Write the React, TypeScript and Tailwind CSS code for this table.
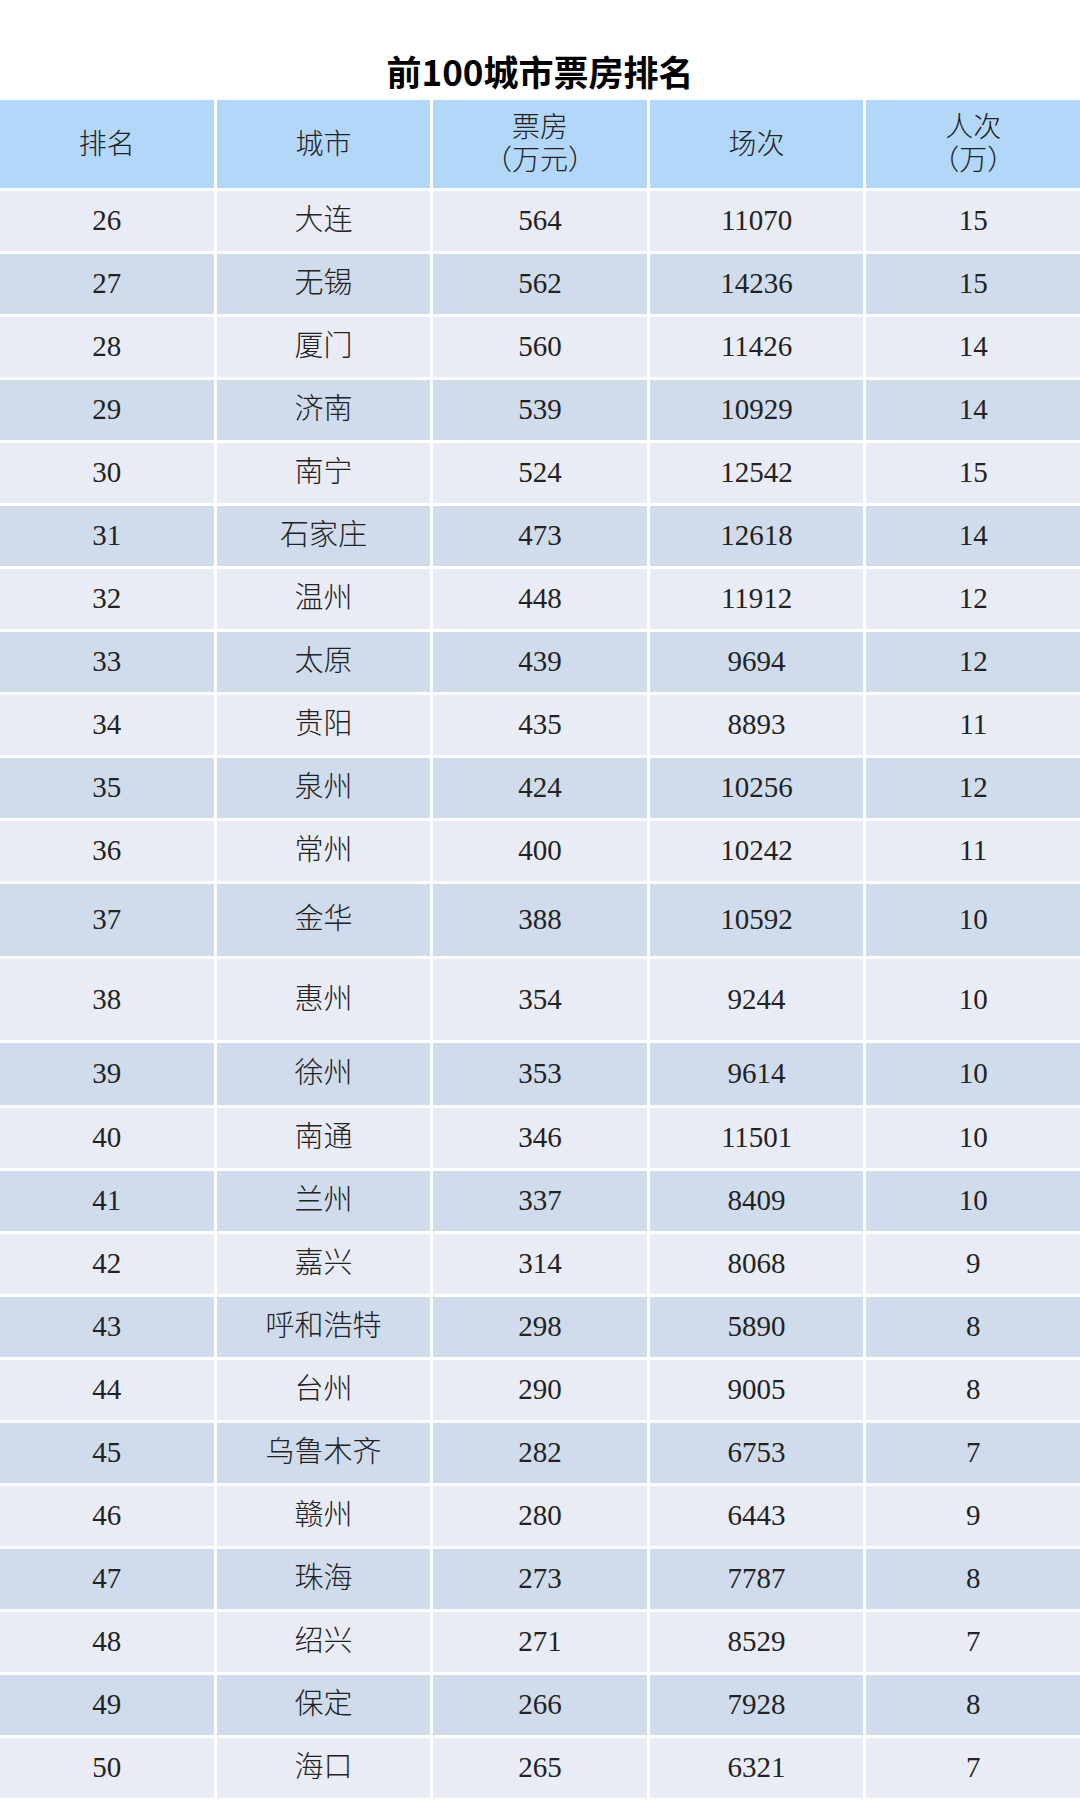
import React from "react";

type Row = {
  rank: number;
  city: string;
  box: number;
  shows: number;
  people: number;
  h?: string;
};

const rows: Row[] = [
  { rank: 26, city: "大连", box: 564, shows: 11070, people: 15 },
  { rank: 27, city: "无锡", box: 562, shows: 14236, people: 15 },
  { rank: 28, city: "厦门", box: 560, shows: 11426, people: 14 },
  { rank: 29, city: "济南", box: 539, shows: 10929, people: 14 },
  { rank: 30, city: "南宁", box: 524, shows: 12542, people: 15 },
  { rank: 31, city: "石家庄", box: 473, shows: 12618, people: 14 },
  { rank: 32, city: "温州", box: 448, shows: 11912, people: 12 },
  { rank: 33, city: "太原", box: 439, shows: 9694, people: 12 },
  { rank: 34, city: "贵阳", box: 435, shows: 8893, people: 11 },
  { rank: 35, city: "泉州", box: 424, shows: 10256, people: 12 },
  { rank: 36, city: "常州", box: 400, shows: 10242, people: 11 },
  { rank: 37, city: "金华", box: 388, shows: 10592, people: 10, h: "h-[72px]" },
  { rank: 38, city: "惠州", box: 354, shows: 9244, people: 10, h: "h-[81px]" },
  { rank: 39, city: "徐州", box: 353, shows: 9614, people: 10, h: "h-[62px]" },
  { rank: 40, city: "南通", box: 346, shows: 11501, people: 10 },
  { rank: 41, city: "兰州", box: 337, shows: 8409, people: 10 },
  { rank: 42, city: "嘉兴", box: 314, shows: 8068, people: 9 },
  { rank: 43, city: "呼和浩特", box: 298, shows: 5890, people: 8 },
  { rank: 44, city: "台州", box: 290, shows: 9005, people: 8 },
  { rank: 45, city: "乌鲁木齐", box: 282, shows: 6753, people: 7 },
  { rank: 46, city: "赣州", box: 280, shows: 6443, people: 9 },
  { rank: 47, city: "珠海", box: 273, shows: 7787, people: 8 },
  { rank: 48, city: "绍兴", box: 271, shows: 8529, people: 7 },
  { rank: 49, city: "保定", box: 266, shows: 7928, people: 8 },
  { rank: 50, city: "海口", box: 265, shows: 6321, people: 7 },
];

const cellFont = {
  fontFamily: '"Liberation Serif", "Noto Sans CJK SC", serif',
};

function HeadCell({ lines }: { lines: string[] }) {
  return (
    <div className="bg-[#b3d7f8] flex flex-col items-center justify-center text-[28px] leading-[33px] font-light text-[#222]">
      {lines.map((l) => (
        <span key={l}>{l}</span>
      ))}
    </div>
  );
}

export default function App() {
  return (
    <div className="bg-white w-[1080px]" style={cellFont}>
      {/* Title */}
      <div
        className="h-[100px] pt-[46px] text-center text-[35px] leading-[50px] font-bold text-black"
        style={{ fontFamily: '"Noto Sans CJK SC", "Noto Sans", sans-serif' }}
      >
        前100城市票房排名
      </div>

      {/* Table */}
      <div className="flex flex-col gap-[3px]">
        <div className="grid grid-cols-5 gap-[3px] h-[88px]">
          <HeadCell lines={["排名"]} />
          <HeadCell lines={["城市"]} />
          <HeadCell lines={["票房", "（万元）"]} />
          <HeadCell lines={["场次"]} />
          <HeadCell lines={["人次", "（万）"]} />
        </div>

        {rows.map((r, i) => {
          const bg = i % 2 === 0 ? "bg-[#e9ebf5]" : "bg-[#d0dcec]";
          return (
            <div
              key={r.rank}
              className={`grid grid-cols-5 gap-[3px] ${r.h ?? "h-[60px]"}`}
            >
              <div className={`${bg} flex items-center justify-center text-[29px] text-[#222]`}>
                {r.rank}
              </div>
              <div className={`${bg} flex items-center justify-center text-[29px] font-light text-[#222]`}>
                {r.city}
              </div>
              <div className={`${bg} flex items-center justify-center text-[29px] text-[#222]`}>
                {r.box}
              </div>
              <div className={`${bg} flex items-center justify-center text-[29px] text-[#222]`}>
                {r.shows}
              </div>
              <div className={`${bg} flex items-center justify-center text-[29px] text-[#222]`}>
                {r.people}
              </div>
            </div>
          );
        })}
      </div>
    </div>
  );
}
